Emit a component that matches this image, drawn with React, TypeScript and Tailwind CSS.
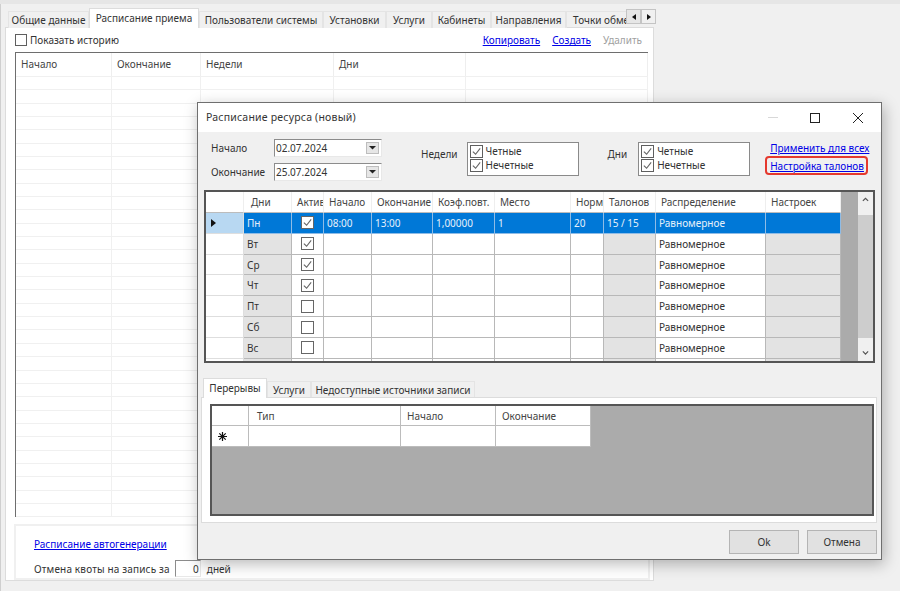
import { ReactNode } from 'react'

const DAYS_COLS = 'grid-cols-[38px_48px_32px_48px_61px_62px_76px_33px_52px_110px_75px]'
const DAYS = [
  { d: 'Пн', on: true },
  { d: 'Вт', on: true },
  { d: 'Ср', on: true },
  { d: 'Чт', on: true },
  { d: 'Пт', on: false },
  { d: 'Сб', on: false },
  { d: 'Вс', on: false },
]

function Check({ on, size = 'size-[13px]', border = 'border-[#5f5f5f]' }: { on?: boolean; size?: string; border?: string }) {
  return (
    <span className={`grid shrink-0 place-items-center border bg-white ${size} ${border}`}>
      {on && (
        <svg viewBox="0 0 12 12" className="size-[11px]" fill="none" stroke="#666" strokeWidth="1.2">
          <path d="M2 6.2 5 9l5-6.5" />
        </svg>
      )}
    </span>
  )
}

function Tab({ w, active, children }: { w: string; active?: boolean; children: ReactNode }) {
  if (active) {
    return (
      <div className={`z-10 flex h-[20px] shrink-0 items-start justify-center border border-b-0 border-[#dcdcdc] bg-white pt-[4px] ${w}`}>
        {children}
      </div>
    )
  }
  return (
    <div className={`flex h-[17px] shrink-0 items-center justify-center overflow-hidden whitespace-nowrap border border-b-0 border-[#e4e4e4] bg-[#f0f0f0] ${w}`}>
      {children}
    </div>
  )
}

function A({ children }: { children: ReactNode }) {
  return <span className="whitespace-nowrap text-[#0000e6] underline">{children}</span>
}

function DateBox({ value }: { value: string }) {
  return (
    <div className="flex h-[18px] w-[108px] items-center justify-between border border-[#8c8c8c] border-r-[#e8e8e8] border-b-[#e8e8e8] bg-white pl-[1px] pr-[2px]">
      <span className="text-[#333]">{value}</span>
      <span className="grid h-[12px] w-[13px] place-items-center border border-[#bdbdbd] bg-[#e6e6e6]">
        <svg viewBox="0 0 8 4" className="w-[7px]"><path d="M0 0h8L4 4z" fill="#222" /></svg>
      </span>
    </div>
  )
}

function Parity({ w }: { w: string }) {
  return (
    <div className={`flex h-[34px] flex-col justify-center gap-[1px] border border-[#8a8a8a] bg-white pb-[1px] pl-[2px] ${w}`}>
      <div className="flex h-[13px] items-center gap-[3px]"><Check on /><span className="mb-[2px]">Четные</span></div>
      <div className="flex h-[13px] items-center gap-[3px]"><Check on /><span className="mb-[2px]">Нечетные</span></div>
    </div>
  )
}

export default function App() {
  return (
    <div className="relative h-[591px] w-[900px] overflow-hidden bg-[#f0f0f0] font-['Noto_Sans',sans-serif] text-[10px] leading-none text-[#333] shadow-[inset_1px_0_0_#cfcfcf]">
      <div className="h-[4px] bg-[#e6e6e6]" />

      {/* window behind */}
      <div className="ml-[5px] w-[652px]">
        <div className="flex h-[23px] items-end pl-[3px]">
          <div className="-mb-px flex w-[618px] items-end overflow-hidden">
            <Tab w="w-[81px]">Общие данные</Tab>
            <Tab w="w-[110px]" active>Расписание приема</Tab>
            <Tab w="w-[124px]">Пользователи системы</Tab>
            <Tab w="w-[63px]">Установки</Tab>
            <Tab w="w-[46px]">Услуги</Tab>
            <Tab w="w-[59px]">Кабинеты</Tab>
            <Tab w="w-[75px]">Направления</Tab>
            <div className="flex h-[17px] w-[60px] shrink-0 items-center overflow-hidden whitespace-nowrap border-t border-l border-[#e4e4e4] pl-[6px]">Точки обмена</div>
          </div>
          <div className="mb-[3px] flex">
            <span className="grid h-[15px] w-[15px] place-items-center border border-[#c4c4c4] bg-[#e6e6e6]">
              <svg viewBox="0 0 4 6" className="w-[4px]"><path d="M4 0v6L0 3z" fill="#111" /></svg>
            </span>
            <span className="grid h-[15px] w-[15px] place-items-center border border-[#c4c4c4] bg-[#f0f0f0]">
              <svg viewBox="0 0 4 6" className="w-[4px]"><path d="M0 0v6l4-3z" fill="#111" /></svg>
            </span>
          </div>
        </div>

        <div className="flex h-[554px] w-[649px] flex-col border border-[#dcdcdc] bg-white pl-[9px] pr-[5px]">
          <div className="flex h-[24px] items-center justify-between pr-[6px]">
            <div className="flex items-center gap-[3px]">
              <Check size="size-[12px]" />
              <span>Показать историю</span>
            </div>
            <div className="flex gap-[12px]">
              <A>Копировать</A>
              <A>Создать</A>
              <span className="text-[#a0a0a0]">Удалить</span>
            </div>
          </div>

          <div className="h-[466px] w-[633px] overflow-hidden border-t border-l border-[#6e6e6e]">
            <div className="grid h-[24px] grid-cols-[96px_89px_133px_132px_1fr] items-center border-b border-[#f0f0f0] text-[#444]">
              {['Начало', 'Окончание', 'Недели', 'Дни', ''].map((h, i) => (
                <div key={i} className="flex h-full items-center border-r border-[#eeeeee] pl-[5px]">{h}</div>
              ))}
            </div>
            {Array.from({ length: 33 }).map((_, r) => (
              <div key={r} className="grid h-[13.35px] grid-cols-[96px_89px_133px_132px_1fr] border-b border-[#f0f0f0]">
                {[0, 1, 2, 3, 4].map((c) => <div key={c} className="border-r border-[#f0f0f0]" />)}
              </div>
            ))}
          </div>

          <div className="mt-[7px] flex h-[56px] w-[636px] -translate-x-px flex-col justify-between border-2 border-[#f0f0f0] pb-[1px] pl-[18px] pt-[13px]">
            <A>Расписание автогенерации</A>
            <div className="flex items-center">
              <span className="tracking-[0.16px]">Отмена квоты на запись за</span>
              <span className="ml-[5px] flex h-[17px] w-[26px] items-center justify-end border border-[#8c8c8c] border-r-[#e8e8e8] border-b-[#e8e8e8] pr-[1px]">0</span>
              <span className="ml-[6px]">дней</span>
            </div>
          </div>
        </div>
      </div>

      {/* dialog */}
      <div className="absolute left-[197px] top-[102px] flex h-[458px] w-[685px] flex-col border border-[#6f6f6f] bg-[#f0f0f0] shadow-[2px_4px_14px_rgba(0,0,0,0.28)]">
        <div className="flex h-[29px] items-center justify-between bg-white pl-[8px] pr-[18px]">
          <span className="text-[10.5px] tracking-[0.2px]">Расписание ресурса (новый)</span>
          <div className="flex items-center">
            <span className="h-px w-[10px] bg-[#d8d8d8]" />
            <span className="ml-[32px] size-[10px] border border-[#222]" />
            <svg viewBox="0 0 10 10" className="ml-[33px] size-[10px]" fill="none" stroke="#222"><path d="M0 0l10 10M10 0 0 10" /></svg>
          </div>
        </div>

        <div className="flex h-[58px] pl-[13px] pr-[5px]">
          <div className="mt-[7px] grid h-fit grid-cols-[63px_108px] items-center gap-y-[6px]">
            <span>Начало</span><DateBox value="02.07.2024" />
            <span>Окончание</span><DateBox value="25.07.2024" />
          </div>
          <span className="ml-[39px] mt-[17px]">Недели</span>
          <div className="ml-[9px] mt-[10px]"><Parity w="w-[112px]" /></div>
          <span className="ml-[29px] mt-[17px]">Дни</span>
          <div className="ml-[11px] mt-[10px]"><Parity w="w-[112px]" /></div>
          <div className="relative ml-[20px] mt-[10px] flex w-[99px] flex-col gap-[8px] pt-[1px]">
            <A>Применить для всех</A>
            <A>Настройка талонов</A>
            <span className="absolute left-[-5px] top-[14px] h-[19px] w-[103px] rounded-[4px] border-2 border-[#e5392e]" />
          </div>
        </div>

        <div className="ml-[6px] flex h-[173px] w-[671px] border-2 border-[#555] bg-[#ababab]">
          <div className="w-[635px] overflow-hidden">
            <div className={`grid h-[21px] bg-white text-[#444] ${DAYS_COLS}`}>
              {['', 'Дни', 'Актив', 'Начало', 'Окончание', 'Коэф.повт.', 'Место', 'Норм', 'Талонов', 'Распределение', 'Настроек'].map((h, i) => (
                <div key={i} className={`flex items-center overflow-hidden whitespace-nowrap border-r border-[#eeeeee] border-b border-b-[#bcbcbc] pl-[5px] ${i === 1 ? 'pl-[7px]' : ''}`}>{h}</div>
              ))}
            </div>
            {[...DAYS, { d: '', on: false }].map((row, r) => {
              const sel = r === 0
              const cell = sel ? 'bg-[#0078d7] text-[#e6f0fa] border-[#8fbce6]' : 'bg-white border-[#b8b8b8]'
              const ro = sel ? cell : 'bg-[#e3e3e3] border-[#b8b8b8]'
              return (
                <div key={r} className={`grid h-[20.83px] ${DAYS_COLS}`}>
                  <div className={`flex items-center border-r border-b border-[#dedede] pl-[5px] ${sel ? 'bg-[#b8d8f2]' : 'bg-white'}`}>
                    {sel && <svg viewBox="0 0 5 8" className="w-[5px]"><path d="M0 0v8l5-4z" fill="#111" /></svg>}
                  </div>
                  <div className={`flex items-center border-r border-b pl-[3px] ${ro}`}>{row.d}</div>
                  <div className={`flex items-center justify-center border-r border-b ${sel ? cell : 'border-[#b8b8b8] bg-white'}`}>
                    {row.d && <Check on={row.on} border="border-[#666]" />}
                  </div>
                  {[row.d === 'Пн' ? '08:00' : '', sel ? '13:00' : '', sel ? '1,00000' : '', sel ? '1' : '', sel ? '20' : ''].map((v, i) => (
                    <div key={i} className={`flex items-center border-r border-b pl-[3px] ${cell}`}>{v}</div>
                  ))}
                  <div className={`flex items-center border-r border-b pl-[3px] ${ro}`}>{sel ? '15 / 15' : ''}</div>
                  <div className={`flex items-center border-r border-b pl-[3px] ${cell}`}>{row.d && 'Равномерное'}</div>
                  <div className={`border-r border-b ${ro}`} />
                </div>
              )
            })}
          </div>
          <div className="ml-auto flex w-[15px] flex-col items-center justify-between bg-[#f0f0f0]">
            <div className="grid h-[15px] place-items-center">
              <svg viewBox="0 0 8 5" className="w-[7px]" fill="none" stroke="#555" strokeWidth="1.4"><path d="M1 4.5 4 1.5l3 3" /></svg>
            </div>
            <div className="h-[123px] w-full bg-[#cdcdcd]" />
            <div className="grid h-[15px] place-items-center">
              <svg viewBox="0 0 8 5" className="w-[7px]" fill="none" stroke="#555" strokeWidth="1.4"><path d="M1 .5 4 3.5l3-3" /></svg>
            </div>
          </div>
        </div>

        <div className="mt-[16px] flex h-[18px] items-end pl-[5px]">
          <div className="-mb-px flex items-end">
            <Tab w="w-[64px]" active>Перерывы</Tab>
            <Tab w="w-[44px]">Услуги</Tab>
            <Tab w="w-[164px]">Недоступные источники записи</Tab>
          </div>
        </div>
        <div className="ml-[3px] h-[126px] w-[676px] border border-[#dcdcdc] bg-white pl-[8px] pt-[6px]">
          <div className="h-[112px] w-[664px] border-2 border-[#555] bg-[#ababab]">
            <div className="grid h-[20px] w-fit grid-cols-[37px_152px_95px_95px] bg-white text-[#444]">
              {['', 'Тип', 'Начало', 'Окончание'].map((h, i) => (
                <div key={i} className={`flex items-center border-b border-r border-[#bcbcbc] ${i === 1 ? 'pl-[8px]' : 'pl-[6px]'}`}>{h}</div>
              ))}
            </div>
            <div className="grid h-[21px] w-fit grid-cols-[37px_152px_95px_95px] bg-white">
              <div className="flex items-center border-r border-b border-[#bcbcbc] pl-[6px] text-[#111]">
                <svg viewBox="0 0 9 9" className="size-[9px]" stroke="#111" strokeWidth="1.2"><path d="M4.5 0v9M0 4.5h9M1.3 1.3l6.4 6.4M7.7 1.3 1.3 7.7" /></svg>
              </div>
              <div className="border-r border-b border-[#bcbcbc]" />
              <div className="border-r border-b border-[#bcbcbc]" />
              <div className="border-r border-b border-[#bcbcbc]" />
            </div>
          </div>
        </div>

        <div className="mt-[7px] flex justify-end gap-[8px] pr-[4px]">
          <div className="grid h-[24px] w-[70px] place-items-center border border-[#b4b4b4] bg-[#e1e1e1]">Ok</div>
          <div className="grid h-[24px] w-[70px] place-items-center border border-[#b4b4b4] bg-[#e1e1e1]">Отмена</div>
        </div>
      </div>
    </div>
  )
}
